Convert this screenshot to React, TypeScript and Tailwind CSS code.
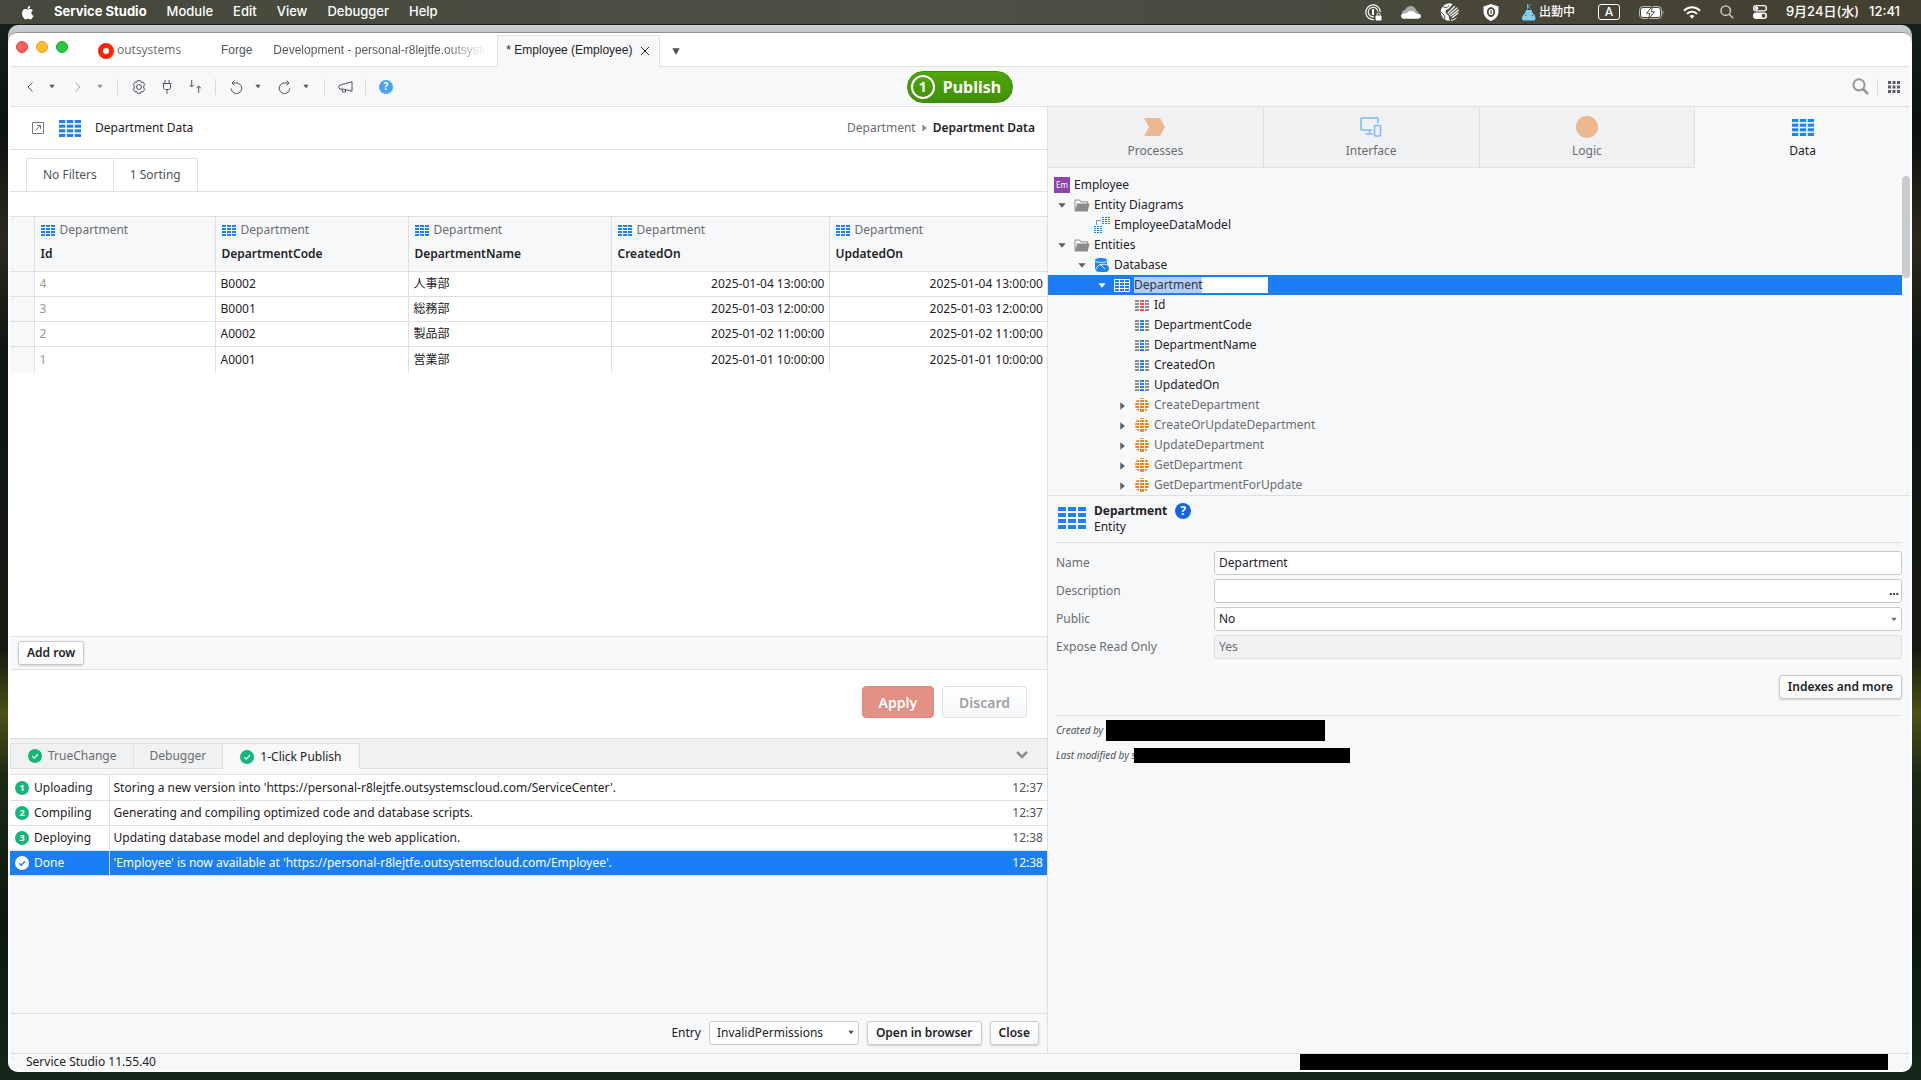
import React from 'react';

const NOTO = "font-['Noto_Sans','Noto_Sans_CJK_JP',sans-serif]";

function Tri({ dir = 'down', className = '' }: { dir?: 'down' | 'right'; className?: string }) {
  return dir === 'down' ? (
    <svg width="8" height="5" viewBox="0 0 8 5" className={className} aria-hidden="true">
      <path d="M0.4 0.2h7.2L4 4.800z" fill="currentColor" />
    </svg>
  ) : (
    <svg width="5" height="8" viewBox="0 0 5 8" className={className} aria-hidden="true">
      <path d="M0.3 0.2v7.600L4.900 4z" fill="currentColor" />
    </svg>
  );
}

function Grid({ w = 14, h = 11, side = '#1a84f5', mid = '#1a84f5' }: { w?: number; h?: number; side?: string; mid?: string }) {
  return (
    <svg width={w} height={h} viewBox="0 0 14 11" preserveAspectRatio="none" className="shrink-0" aria-hidden="true">
      {[0, 3, 6, 9].map((y) =>
        [0, 5, 10].map((x) => <rect key={`${x}-${y}`} x={x} y={y} width="4" height="2" fill={x === 5 ? mid : side} />),
      )}
    </svg>
  );
}

function SelectedGrid() {
  return (
    <svg width="16" height="13" viewBox="0 0 16 13" aria-hidden="true">
      <rect width="16" height="13" rx="1" fill="#fff" />
      {[1, 4, 7, 10].map((y) => [1, 6, 11].map((x) => <rect key={`${x}-${y}`} x={x} y={y} width="4" height="2" fill="#1a7ef7" />))}
    </svg>
  );
}

function ActionIcon() {
  return (
    <svg width="14" height="14" viewBox="0 0 14 14" aria-hidden="true">
      <circle cx="7" cy="7" r="7" fill="#ee8420" />
      <path d="M0 1.500h14M0 4.500h14M0 7.500h14M0 10.500h14M4.500 0v14M9.500 0v14" stroke="#f7f8fa" strokeWidth="1" />
    </svg>
  );
}

function FolderIcon() {
  return (
    <svg width="16" height="13" viewBox="0 0 16 13" aria-hidden="true">
      <path d="M1 11.5V1h4.5l1.3 1.8h6.7V5" fill="none" stroke="#8b8c8e" />
      <path d="M3.2 4.5H15.6L13.6 12.5H0.8z" fill="#8b8c8e" />
    </svg>
  );
}

function DiagramIcon() {
  return (
    <svg width="16" height="16" viewBox="0 0 16 16" aria-hidden="true">
      <path d="M2.5 8V3.5H7" fill="none" stroke="#8b8c8e" />
      {[0, 2, 4, 6].map((y) => [8, 11, 14].map((x) => <rect key={`a${x}-${y}`} x={x} y={y} width="2" height="1" fill="#1a84f5" />))}
      {[9, 11, 13, 15].map((y) => [0, 3, 6].map((x) => <rect key={`b${x}-${y}`} x={x} y={y} width="2" height="1" fill="#1a84f5" />))}
    </svg>
  );
}

function DatabaseIcon() {
  return (
    <svg width="14" height="14" viewBox="0 0 14 14" aria-hidden="true">
      <path d="M0 2C0 .8 3 0 6 0s6 .8 6 2v4.300l2 3.700c0 2.300-1 4-3 4H5C2 14 0 13 0 11.500z" fill="#1a84f5" />
      <path d="M0 3.200c2 1.600 9.500 1.600 12 0M0.500 12.500C2 7.500 5 5.500 12 6.500M5 6l5 5" fill="none" stroke="#f7f8fa" strokeWidth="0.900" />
    </svg>
  );
}

function CheckDot({ inverse = false }: { inverse?: boolean }) {
  return (
    <svg width="14" height="14" viewBox="0 0 14 14" className="shrink-0" aria-hidden="true">
      <circle cx="7" cy="7" r="7" fill={inverse ? '#fff' : '#17b577'} />
      <path d="M4.200 7.200l2 2 3.800-4" fill="none" stroke={inverse ? '#1a7ef7' : '#fff'} strokeWidth={inverse ? 1.5 : 1.2} />
    </svg>
  );
}

function MenuBar() {
  return (
    <header className="flex h-6 shrink-0 items-center bg-gradient-to-r from-[#45483a] via-[#4d5045] to-[#433f30] pl-5 pr-[21px] font-['Inter','Noto_Sans_CJK_JP',sans-serif] text-[13px] font-medium text-white">
      <svg width="14" height="17" viewBox="0 0 14 17" className="mr-5" aria-hidden="true">
        <path fill="#fff" d="M11.300 9c0-1.700 1.400-2.500 1.500-2.600-.8-1.200-2.100-1.400-2.500-1.400-1.100-.1-2.100.6-2.600.6S6.300 5 5.400 5C4.300 5 3.200 5.700 2.600 6.700c-1.200 2.100-.3 5.300.9 7 .6.800 1.300 1.800 2.200 1.700.9 0 1.200-.6 2.300-.6s1.400.6 2.300.6c1 0 1.600-.9 2.100-1.700.7-1 1-1.900 1-2-.1 0-2.100-.8-2.100-2.700zM9.600 3.900c.5-.6.800-1.400.7-2.200-.7 0-1.500.4-2 1-.5.5-.9 1.300-.8 2.100.8.1 1.600-.4 2.100-.9z" />
      </svg>
      <nav className="flex gap-5">
        <span className="font-bold">Service Studio</span>
        <span>Module</span>
        <span>Edit</span>
        <span>View</span>
        <span>Debugger</span>
        <span>Help</span>
      </nav>
      <div className="ml-auto flex items-center gap-[19px]">
        <svg width="17" height="17" viewBox="0 0 17 17" fill="none" stroke="#fff" aria-hidden="true">
          <path d="M9 15.500A7.300 7.300 0 1 1 15.400 8" strokeWidth="1.200" />
          <path d="M9 12.800A4.800 4.800 0 1 1 12.800 7.500" strokeWidth="1.100" />
          <path d="M8 5v6" strokeWidth="2" />
          <rect x="10.500" y="11.500" width="6" height="5" rx="1" fill="#fff" stroke="none" />
          <path d="M12 11.500v-1a1.500 1.500 0 0 1 3 0v1" />
        </svg>
        <svg width="20" height="13" viewBox="0 0 20 13" aria-hidden="true">
          <path d="M1 8c-.5-2 1-4 3-4 1-2.500 3.500-4 6-4 2.600 0 4.500 1.700 5 4l3 3-8 2z" fill="#a9aba3" />
          <path d="M3 12.800c-2 0-3-1.200-3-2.800S1.500 7.300 3.500 7.600C6 7.600 7 5 10 5c2.500 0 4 1 5 2.600 2.800-.6 5 .6 5 2.400s-1.400 2.800-3 2.800z" fill="#fff" />
        </svg>
        <svg width="20" height="18" viewBox="0 0 20 18" aria-hidden="true">
          <circle cx="9.500" cy="9" r="8.800" fill="#fff" />
          <path d="M13 .5L9 5.500 6 7l-.5 3 3 2.500L10 18h10V0z" fill="#474a3b" />
          <path d="M8 10l6.500-6.500M9.500 11.500l7.500-6.500M11 13l7.500-6M12.500 14.500l5.500-4.500" stroke="#fff" strokeWidth="1.200" strokeLinecap="round" />
          <path d="M3 3.500l3.500 1.500 3-3M1 9l3 3 1 4" stroke="#474a3b" fill="none" />
          <path d="M11 17.400c2-.2 4-1 5.500-2.800" stroke="#fff" fill="none" />
        </svg>
        <svg width="24" height="17" viewBox="0 0 24 17" aria-hidden="true">
          <path d="M12 0l7.500 2.500v5C19.500 12 16 15.500 12 17 8 15.500 4.500 12 4.500 7.500v-5z" fill="#fff" />
          <ellipse cx="12" cy="8" rx="3.200" ry="4" fill="none" stroke="#4a4d3f" strokeWidth="1.800" />
          <path d="M12 6v4" stroke="#4a4d3f" strokeWidth="1.200" />
        </svg>
        <span className="flex items-center gap-[3px]">
          <svg width="14" height="17" viewBox="0 0 14 17" aria-hidden="true">
            <path d="M5.500 0v5M8.800 0L5.800 2.500l3 2.500" stroke="#58bdf0" fill="none" />
            <path d="M4 6h5.500l1 3c2 1.500 3 3.500 3 5.500 0 1.500-1 2-2 2H2c-1 0-2-.6-2-2 0-2 1.200-4.200 3.200-5.500z" fill="#7cd1fb" />
            <path d="M5.500 12.500h3l-1.500 1.500z" fill="#f3c94f" />
            <circle cx="3.500" cy="11.500" r=".6" fill="#335" /><circle cx="10.500" cy="11.500" r=".6" fill="#335" />
          </svg>
          <span className="text-[12px]">出勤中</span>
        </span>
        <span className="ml-1 flex h-4 w-[22px] items-center justify-center rounded-[3px] border border-white text-[12px]">A</span>
        <svg width="25" height="13" viewBox="0 0 25 13" aria-hidden="true">
          <rect x="0.500" y="0.500" width="22" height="12" rx="3.500" fill="none" stroke="#b9bab3" />
          <rect x="2" y="2" width="19" height="9" rx="2" fill="#fff" />
          <path d="M23.500 4.500v4c1.300-.6 1.300-3.400 0-4z" fill="#b9bab3" />
          <path d="M13.500 0L7.500 7.200h3.200L9.500 13l6-7.200h-3.200z" fill="#fff" stroke="#474a3b" />
        </svg>
        <svg width="18" height="13" viewBox="0 0 18 13" fill="none" stroke="#fff" aria-hidden="true">
          <path d="M1 4.800C5.500.2 12.500.2 17 4.800" strokeWidth="2" />
          <path d="M4 7.900c3-2.900 7-2.900 10 0" strokeWidth="2" />
          <path d="M6.500 10L9 12.800l2.500-2.800c-1.400-1.300-3.600-1.300-5 0z" fill="#fff" stroke="none" />
        </svg>
        <svg width="14" height="14" viewBox="0 0 14 14" fill="none" stroke="#c4c4bd" strokeWidth="1.600" aria-hidden="true">
          <circle cx="5.700" cy="5.700" r="4.700" /><path d="M9.200 9.200l4 4" />
        </svg>
        <svg width="14" height="14" viewBox="0 0 14 14" aria-hidden="true">
          <rect x="0.600" y="0.600" width="12.800" height="5.300" rx="2.650" fill="none" stroke="#fff" strokeWidth="1.200" />
          <circle cx="3.500" cy="3.250" r="1.800" fill="#fff" />
          <rect y="7.500" width="14" height="6.500" rx="3.250" fill="#fff" /><circle cx="10.500" cy="10.750" r="1.900" fill="#474a3b" />
        </svg>
        <span className="flex gap-2.5"><span>9月24日(水)</span><span>12:41</span></span>
      </div>
    </header>
  );
}

function TitleBar() {
  return (
    <div className="flex h-[34px] items-end bg-white font-['Liberation_Sans',Arial,sans-serif] text-[12px] text-[#515459]">
      <div className="flex h-[34px] min-w-0 items-center self-stretch border-b border-[#dfe0e2]">
        <div className="flex gap-2 pb-[5px] pl-1.5">
          <button aria-label="Close window" className="size-3 rounded-full border border-[#e0443e] bg-[#fe5f57]" />
          <button aria-label="Minimize" className="size-3 rounded-full border border-[#dea123] bg-[#febc2e]" />
          <button aria-label="Zoom" className="size-3 rounded-full border border-[#1aab29] bg-[#28c840]" />
        </div>
        <div className="ml-[30px] flex w-[84px] items-center gap-[3px]">
          <svg width="16" height="16" viewBox="0 0 16 16" className="mt-0.5 shrink-0" aria-hidden="true">
            <circle cx="8" cy="8" r="5.500" fill="none" stroke="#fb2607" strokeWidth="5" />
          </svg>
          <span className="font-['Open_Sans','Noto_Sans',sans-serif] text-[12px] font-medium text-[#6b6b6b]">outsystems</span>
        </div>
        <button className="ml-[39px]">Forge</button>
        <button className="mr-[11px] ml-[21px] w-[213px] bg-gradient-to-r from-[#515459] from-80% to-white bg-clip-text text-left whitespace-nowrap text-transparent">
          Development - personal-r8lejtfe.outsyste
        </button>
      </div>
      <div className="flex h-8 shrink-0 items-center gap-2 border-x border-t border-[#dfe0e2] bg-[#f7f8fa] pr-[9px] pb-[3px] pl-2 text-[#1f2226]">
        <span>* Employee (Employee)</span>
        <button aria-label="Close tab" className="pt-0.5">
          <svg width="10" height="10" viewBox="0 0 10 10" stroke="#1f2226" aria-hidden="true"><path d="M1 1l8 8M9 1l-8 8" /></svg>
        </button>
      </div>
      <div className="flex flex-1 items-center self-stretch border-b border-[#dfe0e2] pl-3">
        <button aria-label="All tabs" className="pt-1 text-[#4b4e52]">
          <svg width="8" height="7" viewBox="0 0 8 7" aria-hidden="true"><path d="M0.300 0.300h7.400L4 6.800z" fill="currentColor" /></svg>
        </button>
      </div>
    </div>
  );
}

const S = { fill: 'none', stroke: '#515459', strokeWidth: 1 } as const;

function Sep({ className = '' }: { className?: string }) {
  return <span className={`h-4 w-px bg-[#d8d9dc] ${className}`} />;
}

function TB({ label, className, children }: { label: string; className: string; children: React.ReactNode }) {
  return <button aria-label={label} className={`flex h-6 items-center justify-center text-[#515459] ${className}`}>{children}</button>;
}

function Toolbar() {
  return (
    <div className="grid h-10 grid-cols-[1fr_auto_1fr] items-center border-b border-[#dfe0e2] bg-[#f7f8fa]">
      <div className="flex items-center pl-2.5">
        <TB label="Back" className="w-5"><svg width="6" height="10" viewBox="0 0 6 10" {...S}><path d="M5.500.5L1 5l4.500 4.500" /></svg></TB>
        <TB label="Back history" className="w-6"><Tri className="w-[6px]" /></TB>
        <TB label="Forward" className="w-7 opacity-50"><svg width="6" height="10" viewBox="0 0 6 10" {...S}><path d="M.5.5L5 5 .5 9.500" /></svg></TB>
        <TB label="Forward history" className="w-4 opacity-60"><Tri className="w-[6px]" /></TB>
        <Sep className="mx-[9px]" />
        <TB label="Settings" className="w-6">
          <svg width="14" height="14" viewBox="0 0 14 14" {...S} strokeLinejoin="round">
            <path d="M5.300.7h3.400l.5 1.700 1.700-.4 1.900 2.600L11.700 6v2l1.100 1.400-1.900 2.600-1.700-.4-.5 1.700H5.300l-.5-1.700-1.700.4-1.900-2.600L2.300 8V6L1.200 4.600 3.100 2l1.700.4z" />
            <circle cx="7" cy="7" r="2.500" />
          </svg>
        </TB>
        <TB label="Connect" className="w-8">
          <svg width="10" height="14" viewBox="0 0 10 14" {...S}><path d="M.5 3.500h9M1.500 3.500V7a2 2 0 0 0 2 2.500h3a2 2 0 0 0 2-2.500V3.500M3 0v3.500M7 0v3.500M5 9.500V14" /></svg>
        </TB>
        <TB label="Compare" className="w-6">
          <svg width="13" height="13" viewBox="0 0 13 13" {...S}><path d="M2.700 0v7M.5 4.800L2.700 7l2.200-2.200M9.700 13V6M7.500 8.200L9.700 6l2.200 2.200" /></svg>
        </TB>
        <Sep className="mx-2" />
        <TB label="Undo" className="w-6">
          <svg width="13" height="14" viewBox="0 0 13 14" {...S}><path d="M4.500.5L2 3l2.500 2.500M2 3h4.500a5.300 5.300 0 1 1-5.300 5.500" /></svg>
        </TB>
        <TB label="Undo history" className="w-5"><Tri className="w-[6px]" /></TB>
        <TB label="Redo" className="w-8">
          <svg width="13" height="14" viewBox="0 0 13 14" {...S}><path d="M8.500.5L11 3 8.500 5.500M11 3H6.500a5.300 5.300 0 1 0 5.300 5.500" /></svg>
        </TB>
        <TB label="Redo history" className="w-3"><Tri className="w-[6px]" /></TB>
        <Sep className="ml-3 mr-2" />
        <TB label="Feedback" className="w-6">
          <svg width="15" height="12" viewBox="0 0 15 12" {...S} strokeLinejoin="round"><path d="M14 .8v9.400L4.500 8H2L.8 6.800V5.200L2 4zM4 8l.5 3h3V8.700" /></svg>
        </TB>
        <Sep className="mx-2" />
        <TB label="Help" className="w-6">
          <span className={`flex size-3.5 items-center justify-center rounded-full bg-[#4aa3f8] text-[10px] font-bold text-white ${NOTO}`}>?</span>
        </TB>
      </div>
      <button className="flex h-8 items-center gap-2 rounded-full border border-[#3c8a08] bg-gradient-to-b from-[#52a70c] to-[#418f03] pr-[11px] pl-[3px] text-[16px] font-bold text-white">
        <span className="flex size-6 items-center justify-center rounded-full border-2 border-white text-[14px] leading-none">1</span>
        Publish
      </button>
      <div className="flex items-center justify-end pr-2.5">
        <button aria-label="Search">
          <svg width="17" height="17" viewBox="0 0 17 17" fill="none" stroke="#97989b" strokeWidth="2" aria-hidden="true">
            <circle cx="7" cy="6.800" r="5.600" /><path d="M11 11l5 5" strokeWidth="2.600" />
          </svg>
        </button>
        <Sep className="mr-2.5 ml-2" />
        <button aria-label="Apps">
          <svg width="12" height="12" viewBox="0 0 12 12" fill="#5b5d60" aria-hidden="true">
            {[0, 4.5, 9].map((y) => [0, 4.5, 9].map((x) => <rect key={`${x}-${y}`} x={x} y={y} width="3" height="3" />))}
          </svg>
        </button>
      </div>
    </div>
  );
}

const columns = ['Id', 'DepartmentCode', 'DepartmentName', 'CreatedOn', 'UpdatedOn'];
const records = [
  ['4', 'B0002', '人事部', '2025-01-04 13:00:00'],
  ['3', 'B0001', '総務部', '2025-01-03 12:00:00'],
  ['2', 'A0002', '製品部', '2025-01-02 11:00:00'],
  ['1', 'A0001', '営業部', '2025-01-01 10:00:00'],
];

function DataTable() {
  return (
    <table className="w-full table-fixed border-collapse border-t border-[#dfe0e2]">
      <colgroup>
        <col className="w-6" /><col className="w-[181px]" /><col className="w-[193px]" /><col className="w-[203px]" /><col className="w-[218px]" /><col />
      </colgroup>
      <thead>
        <tr className="h-[55px] border-b border-[#dfe0e2] bg-[#f7f8fa] text-left">
          <th className="border-r border-[#dfe0e2]" aria-label="Row" />
          {columns.map((c) => (
            <th key={c} className="border-r border-[#dfe0e2] pt-1 pb-2 pl-1.5 align-top leading-[18px] font-normal last:border-r-0">
              <span className="flex items-center gap-[5px] text-[#6a6c70]"><Grid />Department</span>
              <span className="mt-1.5 block font-semibold text-[#1f2226]">{c}</span>
            </th>
          ))}
        </tr>
      </thead>
      <tbody>
        {records.map(([id, code, name, date]) => (
          <tr key={id} className="h-[25px] border-b border-[#dfe0e2] last:h-[26px] last:border-b-0">
            <td className="border-r border-[#dfe0e2] bg-[#f7f8fa]" />
            <td className="border-r border-[#dfe0e2] px-[5px] leading-4 text-[#97989b]">{id}</td>
            <td className="border-r border-[#dfe0e2] px-[5px] leading-4">{code}</td>
            <td className="border-r border-[#dfe0e2] px-[5px] leading-4">{name}</td>
            <td className="border-r border-[#dfe0e2] px-1 text-right leading-4">{date}</td>
            <td className="px-1 text-right leading-4">{date}</td>
          </tr>
        ))}
      </tbody>
    </table>
  );
}

const btn = 'h-6 rounded-[3px] border border-[#c8cacd] bg-gradient-to-b from-white to-[#f7f8fa] font-semibold text-[#1f2226] shadow-[0_1px_2px_rgba(0,0,0,0.18)]';

const steps = [
  ['1', 'Uploading', "Storing a new version into 'https://personal-r8lejtfe.outsystemscloud.com/ServiceCenter'.", '12:37'],
  ['2', 'Compiling', 'Generating and compiling optimized code and database scripts.', '12:37'],
  ['3', 'Deploying', 'Updating database model and deploying the web application.', '12:38'],
  ['', 'Done', "'Employee' is now available at 'https://personal-r8lejtfe.outsystemscloud.com/Employee'.", '12:38'],
];

function PublishLog() {
  return (
    <table className="w-full border-collapse border-t border-[#dfe0e2] bg-white">
      <tbody>
        {steps.map(([n, step, msg, time]) => (
          <tr key={step} className={n ? 'h-[25px] border-b border-[#dfe0e2] first:h-[26px]' : 'h-[25px] border-b border-[#dfe0e2] bg-[#1a7ef7] text-white'}>
            <td className="w-[99px] border-r border-[#dfe0e2] pl-[5px]">
              <span className="flex items-center gap-[5px] leading-4">
                {n ? <span className="flex size-3.5 items-center justify-center rounded-full bg-[#17b577] text-[9px] font-bold text-white">{n}</span> : <CheckDot inverse />}
                {step}
              </span>
            </td>
            <td className="pl-1 leading-4">{msg}</td>
            <td className={n ? 'w-12 pr-1 text-right leading-4 text-[#515459]' : 'w-12 pr-1 text-right leading-4'}>{time}</td>
          </tr>
        ))}
      </tbody>
    </table>
  );
}

function LeftPane() {
  return (
    <main className="flex min-w-0 flex-col border-r border-[#dfe0e2] bg-white">
      <div className="flex h-[43px] items-center border-b border-[#dfe0e2] pr-3 pl-[22px]">
        <button aria-label="Open in window">
          <svg width="12" height="12" viewBox="0 0 12 12" fill="none" stroke="#77797c" aria-hidden="true"><path d="M.5.500h11v11H.5zM3.500 8.500l5-5M5 3.500h3.500V7" /></svg>
        </button>
        <span className="mr-3.5 ml-[15px]"><Grid w={22} h={17} /></span>
        <h1>Department Data</h1>
        <nav className="ml-auto flex items-center gap-1.5">
          <a href="#department" className="text-[#6a6c70]">Department</a>
          <Tri dir="right" className="text-[#8b8c8e]" />
          <span className="font-semibold">Department Data</span>
        </nav>
      </div>
      <div className="flex h-[42px] items-end border-b border-[#dfe0e2] pl-4 text-[#515459]">
        <button className="h-[33px] border-x border-t border-[#dfe0e2] px-4">No Filters</button>
        <button className="h-[33px] border-t border-r border-[#dfe0e2] px-4">1 Sorting</button>
      </div>
      <div className="flex-[420_1_0px] pt-6"><DataTable /></div>
      <div className="flex h-[34px] items-center border-y border-[#dfe0e2] bg-[#f7f8fa] pl-2">
        <button className={`px-2 ${btn}`}>Add row</button>
      </div>
      <div className="flex h-[69px] items-center justify-end gap-2 border-b border-[#dfe0e2] pr-5 pb-1 text-[14px] font-semibold">
        <button className="h-8 rounded-[4px] border border-[#dc877c] bg-[#e29184] px-4 text-white">Apply</button>
        <button className="h-8 rounded-[4px] border border-[#dfe0e2] bg-gradient-to-b from-white to-[#f7f8fa] px-4 text-[#9fa1a4]">Discard</button>
      </div>
      <div role="tablist" className="flex h-[30px] shrink-0 items-end bg-[#f0f1f3] text-[#6a6c70]">
        <button role="tab" className="flex h-[26px] items-center gap-1.5 border border-[#dfe0e2] pr-4 pl-[17px]"><CheckDot />TrueChange</button>
        <button role="tab" className="h-[26px] border-y border-[#dfe0e2] px-4">Debugger</button>
        <button role="tab" aria-selected="true" className="flex h-[26px] items-center gap-1.5 border-x border-t border-[#dfe0e2] bg-[#f7f8fa] px-[17px] text-[#1f2226]"><CheckDot />1-Click Publish</button>
        <div className="flex flex-1 items-center justify-end self-stretch border-b border-[#dfe0e2] pr-[19px]">
          <button aria-label="Collapse" className="pt-0.5">
            <svg width="12" height="8" viewBox="0 0 12 8" fill="none" stroke="#8b8c8e" strokeWidth="2.500" aria-hidden="true"><path d="M1 1l5 5 5-5" /></svg>
          </button>
        </div>
      </div>
      <div className="flex-[239_1_0px] bg-[#f7f8fa] pt-[5px]"><PublishLog /></div>
      <div className="flex h-10 items-center justify-end gap-2 border-t border-[#dfe0e2] bg-[#f7f8fa] pr-2 pb-0.5">
        <label htmlFor="entry">Entry</label>
        <span className="relative flex items-center">
          <select id="entry" className="h-6 w-[150px] appearance-none rounded-[3px] border border-[#c8cacd] bg-white pl-[7px]">
            <option>InvalidPermissions</option>
          </select>
          <Tri className="pointer-events-none absolute right-[5px] w-[6px] text-[#4b4e52]" />
        </span>
        <button className={`px-2 ${btn}`}>Open in browser</button>
        <button className={`px-2 ${btn}`}>Close</button>
      </div>
    </main>
  );
}

function LayerTabs() {
  const base = 'flex flex-1 flex-col items-center border-r border-b border-[#dfe0e2] bg-[#f0f1f3] pt-2 text-[#6a6c70]';
  const slot = 'flex h-6 items-center';
  return (
    <div role="tablist" className="flex h-[61px] shrink-0">
      <button role="tab" className={base}>
        <span className={slot}><svg width="22" height="18" viewBox="0 0 22 18" aria-hidden="true"><path d="M0 0h16l5 9-5 9H0l5-9z" fill="#ecb88f" /></svg></span>
        <span className="mt-[3px]">Processes</span>
      </button>
      <button role="tab" className={base}>
        <span className={slot}>
          <svg width="22" height="20" viewBox="0 0 22 20" fill="none" stroke="#7dbaf5" strokeWidth="1.500" aria-hidden="true">
            <path d="M18 6V1.800Q18 1 17.200 1H1.800Q1 1 1 1.800v10.400q0 .8.800.800H12M9.500 13v4M5.500 17H13" />
            <rect x="14.500" y="8.500" width="6" height="10.500" rx="1" />
          </svg>
        </span>
        <span className="mt-[3px]">Interface</span>
      </button>
      <button role="tab" className={base}>
        <span className={slot}><span className="size-[22px] rounded-full bg-[#ecb88f]" /></span>
        <span className="mt-[3px]">Logic</span>
      </button>
      <button role="tab" aria-selected="true" className="flex flex-1 flex-col items-center pt-2">
        <span className={slot}><Grid w={22} h={17} /></span>
        <span className="mt-[3px]">Data</span>
      </button>
    </div>
  );
}

type Node = { label: string; pad: string; icon: React.ReactNode; arrow?: 'down' | 'right'; dim?: boolean; edit?: boolean };

const nodes: Node[] = [
  { label: 'Entity Diagrams', pad: 'pl-2', icon: <FolderIcon />, arrow: 'down' },
  { label: 'EmployeeDataModel', pad: 'pl-7', icon: <DiagramIcon /> },
  { label: 'Entities', pad: 'pl-2', icon: <FolderIcon />, arrow: 'down' },
  { label: 'Database', pad: 'pl-7', icon: <DatabaseIcon />, arrow: 'down' },
  { label: 'Department', pad: 'pl-12', icon: <SelectedGrid />, arrow: 'down', edit: true },
  { label: 'Id', pad: 'pl-[68px]', icon: <Grid side="#8b8c8e" mid="#f0523d" /> },
  ...['DepartmentCode', 'DepartmentName', 'CreatedOn', 'UpdatedOn'].map((label) => ({ label, pad: 'pl-[68px]', icon: <Grid side="#8b8c8e" mid="#1a84f5" /> })),
  ...['CreateDepartment', 'CreateOrUpdateDepartment', 'UpdateDepartment', 'GetDepartment', 'GetDepartmentForUpdate'].map((label) => ({
    label, pad: 'pl-[68px]', icon: <ActionIcon />, arrow: 'right' as const, dim: true,
  })),
];

function Tree() {
  return (
    <div className="flex h-[328px] shrink-0 overflow-hidden border-b border-[#dfe0e2] pt-[7px]">
      <ul className="min-w-0 flex-1">
        <li className="flex h-5 items-center gap-1 pl-1.5">
          <span className="flex size-4 items-center justify-center bg-[#8e44ad] text-[8px] leading-none text-white">Em</span>
          <span className="leading-4">Employee</span>
        </li>
        {nodes.map((n) => (
          <li key={n.label} className={`flex h-5 items-center ${n.pad} ${n.edit ? 'bg-[#1a7ef7] text-white' : ''}`}>
            <span className="flex w-3 justify-center pt-px">{n.arrow && <Tri dir={n.arrow} className={n.edit ? 'text-white' : 'text-[#5b5d60]'} />}</span>
            <span className="mr-0.5 ml-1.5 flex w-4 justify-center">{n.icon}</span>
            {n.edit ? (
              <input aria-label="Entity name" defaultValue={n.label} className="ml-0.5 h-4 w-[134px] bg-[linear-gradient(to_right,#b0cff9_68px,white_68px)] leading-4 text-[#33363a] outline-none" />
            ) : (
              <span className={n.dim ? 'ml-0.5 leading-4 text-[#6a6c70]' : 'ml-0.5 leading-4'}>{n.label}</span>
            )}
          </li>
        ))}
      </ul>
      <div className="mt-px h-[102px] w-2 rounded-full bg-[#cbccd0]" />
    </div>
  );
}

function RightPane() {
  const field = 'h-6 w-full rounded-[3px] border border-[#c8cacd] bg-white px-1';
  return (
    <aside className="flex min-w-0 flex-col bg-[#f7f8fa]">
      <LayerTabs />
      <Tree />
      <section className="pr-2 pl-2">
        <div className="flex h-[47px] items-start gap-2 border-b border-[#dfe0e2] pl-0.5">
          <span className="mt-[11px]"><Grid w={28} h={22} /></span>
          <div className="pt-[7px] leading-4">
            <div className="flex items-center gap-2">
              <h2 className="font-bold">Department</h2>
              <button aria-label="Help" className="flex size-4 items-center justify-center rounded-full bg-[#1565dc] text-[12px] font-bold text-white">?</button>
            </div>
            <div>Entity</div>
          </div>
        </div>
        <form className="grid grid-cols-[158px_1fr] items-center gap-y-1 pt-2 text-[#1f2226]">
          <label htmlFor="name" className="text-[#6a6c70]">Name</label>
          <input id="name" className={`pb-0.5 ${field}`} defaultValue="Department" />
          <label htmlFor="desc" className="text-[#6a6c70]">Description</label>
          <span className="relative">
            <input id="desc" className={field} />
            <button type="button" aria-label="Edit description" className="absolute right-[3px] bottom-1 leading-4 font-bold">...</button>
          </span>
          <label htmlFor="public" className="text-[#6a6c70]">Public</label>
          <span className="relative flex items-center">
            <select id="public" className={`appearance-none ${field}`}><option>No</option></select>
            <Tri className="pointer-events-none absolute right-[5px] w-[6px] text-[#6a6c70]" />
          </span>
          <label htmlFor="expose" className="text-[#6a6c70]">Expose Read Only</label>
          <input id="expose" readOnly className="h-6 w-full rounded-[3px] border border-[#dfe0e2] bg-[#f0f1f3] px-1 pb-0.5 text-[#6a6c70]" defaultValue="Yes" />
        </form>
        <div className="flex justify-end border-b border-[#dfe0e2] py-4">
          <button className={`px-2 ${btn}`}>Indexes and more</button>
        </div>
        <div className="flex flex-col gap-1 pt-1 text-[10px] text-[#515459] italic">
          <div className="flex h-[21px] items-center"><span className="w-[50px] whitespace-nowrap">Created by</span><span className="h-[21px] w-[219px] bg-black" /></div>
          <div className="flex h-[21px] items-center"><span className="w-[78px] whitespace-nowrap">Last modified by s</span><span className="relative h-[15px] w-[216px] bg-black" /></div>
        </div>
      </section>
    </aside>
  );
}

export default function App() {
  return (
    <div className={`flex min-h-screen flex-col bg-[linear-gradient(180deg,#16231f_0%,#0b1210_12%,#2e2a1c_22%,#0d1512_33%,#171a12_60%,#4c5016_66%,#1c2a14_72%,#0a1810_85%,#14261a_100%)] text-[12px] text-[#1f2226] ${NOTO}`}>
      <MenuBar />
      <div className="mt-px mr-[9px] mb-2 ml-2 flex flex-1 flex-col rounded-t-[10px] rounded-b-[10px] bg-gradient-to-b from-[#cdd0d4] to-[#c0c4c9] to-[8px] pt-[7px]">
        <div className="flex flex-1 flex-col overflow-hidden rounded-[10px] border-t border-[#8d9196] bg-white px-0.5 pb-0.5">
          <TitleBar />
          <Toolbar />
          <div className="grid flex-1 grid-cols-[1038fr_862fr]">
            <LeftPane />
            <RightPane />
          </div>
          <footer className="flex h-[17px] items-center justify-between border-t border-[#dfe0e2] bg-[#f7f8fa] pr-[22px] pl-4">
            <span className="leading-4">Service Studio 11.55.40</span>
            <span className="h-4 w-[588px] bg-black" />
          </footer>
        </div>
      </div>
    </div>
  );
}
